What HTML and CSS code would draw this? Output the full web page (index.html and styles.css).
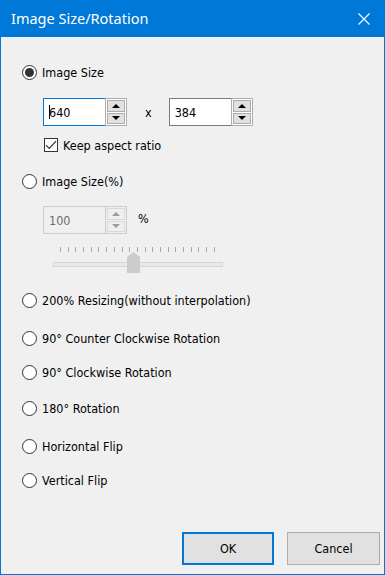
FILE: index.html
```html
<!DOCTYPE html>
<html lang="en">
<head>
  <meta charset="UTF-8">
  <meta name="viewport" content="width=device-width, initial-scale=1.0">
  <title>Image Size/Rotation</title>
  <link rel="stylesheet" href="styles.css">
</head>
<body>
  <div class="window">
    <div class="titlebar">
      <span class="title">Image Size/Rotation</span>
      <svg class="close" width="12" height="12" viewBox="0 0 12 12">
        <path d="M0.5 0.5 L11.5 11.5 M11.5 0.5 L0.5 11.5" stroke="#fff" stroke-width="1.1" fill="none"/>
      </svg>
    </div>

    <div class="content">
      <label class="radio-row row-size"><span class="radio checked"></span>Image Size</label>

      <div class="size-row">
        <div class="spin focused">
          <div class="field"><span class="caret"></span>640</div>
          <div class="arrows">
            <span class="arrow"><span class="tri up"></span></span>
            <span class="arrow"><span class="tri down"></span></span>
          </div>
        </div>
        <span class="times">x</span>
        <div class="spin">
          <div class="field">384</div>
          <div class="arrows">
            <span class="arrow"><span class="tri up"></span></span>
            <span class="arrow"><span class="tri down"></span></span>
          </div>
        </div>
      </div>

      <label class="check-row">
        <span class="checkbox">
          <svg width="12" height="12" viewBox="0 0 12 12"><path d="M1 6.2 L4.3 9.5 L11 2.2" stroke="#333" stroke-width="1.2" fill="none"/></svg>
        </span>Keep aspect ratio
      </label>

      <label class="radio-row row-pct"><span class="radio"></span>Image Size(%)</label>

      <div class="pct-row">
        <div class="spin disabled">
          <div class="field">100</div>
          <div class="arrows">
            <span class="arrow"><span class="tri up"></span></span>
            <span class="arrow"><span class="tri down"></span></span>
          </div>
        </div>
        <span class="percent">%</span>
      </div>

      <div class="slider">
        <div class="ticks">
          <span></span><span></span><span></span><span></span><span></span><span></span><span></span>
          <span></span><span></span><span></span><span></span><span></span><span></span><span></span>
          <span></span><span></span><span></span><span></span><span></span><span></span><span></span>
        </div>
        <div class="track"></div>
        <svg class="thumb" width="13" height="21" viewBox="0 0 13 21"><path d="M0 5 L6.5 0 L13 5 V21 H0 Z" fill="#cccccc"/></svg>
      </div>

      <label class="radio-row row-200"><span class="radio"></span>200% Resizing(without interpolation)</label>
      <label class="radio-row row-ccw"><span class="radio"></span>90&deg;&nbsp;Counter Clockwise Rotation</label>
      <label class="radio-row row-cw"><span class="radio"></span>90&deg;&nbsp;Clockwise Rotation</label>
      <label class="radio-row row-180"><span class="radio"></span>180&deg;&nbsp;Rotation</label>
      <label class="radio-row row-hflip"><span class="radio"></span>Horizontal Flip</label>
      <label class="radio-row row-vflip"><span class="radio"></span>Vertical Flip</label>
    </div>

    <div class="buttons">
      <button class="btn default">OK</button>
      <button class="btn">Cancel</button>
    </div>
  </div>
</body>
</html>
```

FILE: styles.css
```css
html, body {
  margin: 0;
  padding: 0;
}

body {
  width: 385px;
  height: 575px;
  background-color: #f0f0f0;
  font-family: "DejaVu Sans Condensed", "Liberation Sans", sans-serif;
  font-size: 12.5px;
  color: #000;
}

.window {
  box-sizing: border-box;
  width: 385px;
  height: 575px;
  border: 1px solid #0078d7;
  background-color: #f0f0f0;
  display: flex;
  flex-direction: column;
}

.titlebar {
  height: 36px;
  background-color: #0078d7;
  color: white;
  display: flex;
  align-items: center;
  justify-content: space-between;
  padding: 0 14px 0 10px;
  flex-shrink: 0;
}

.title {
  font-family: "Noto Sans", "Open Sans", sans-serif;
  font-size: 14.5px;
  margin-top: -2px;
}

.close {
  margin-top: -1px;
}

.content {
  display: flex;
  flex-direction: column;
  padding-left: 21px;
}

.radio-row {
  display: flex;
  align-items: center;
  height: 20px;
  gap: 5px;
}

.radio {
  box-sizing: border-box;
  width: 15px;
  height: 15px;
  border: 1px solid #333;
  border-radius: 50%;
  background-color: #fff;
  display: flex;
  align-items: center;
  justify-content: center;
  flex-shrink: 0;
}

.radio.checked::after {
  content: "";
  width: 9px;
  height: 9px;
  border-radius: 50%;
  background-color: #333;
}

.row-size { margin-top: 25px; }
.row-pct { margin-top: 16px; }
.row-200 { margin-top: 17px; }
.row-ccw { margin-top: 18px; }
.row-cw { margin-top: 14px; }
.row-180 { margin-top: 16px; }
.row-hflip { margin-top: 18px; }
.row-vflip { margin-top: 14px; }

/* spin boxes */
.size-row, .pct-row {
  display: flex;
  align-items: center;
  padding-left: 21px;
  height: 28px;
}

.size-row { margin-top: 16px; }
.pct-row { margin-top: 15px; }

.spin {
  display: flex;
  height: 28px;
  width: 84px;
}

.field {
  box-sizing: border-box;
  width: 62px;
  height: 28px;
  border: 1px solid #7a7a7a;
  border-right: none;
  background-color: #fff;
  padding-left: 5px;
  display: flex;
  align-items: center;
}

.spin.focused .field {
  border-color: #0078d7;
}

.caret {
  width: 1px;
  height: 14px;
  background-color: #000;
  margin-right: -1px;
}

.arrows {
  box-sizing: border-box;
  width: 22px;
  height: 28px;
  border: 1px solid #adadad;
  background-color: #fff;
  padding: 1px;
  display: flex;
  flex-direction: column;
  gap: 1px;
}

.arrow {
  box-sizing: border-box;
  flex: 1;
  border: 1px solid #adadad;
  background-color: #e1e1e1;
  display: flex;
  align-items: center;
  justify-content: center;
}

.tri {
  width: 0;
  height: 0;
  border-left: 4px solid transparent;
  border-right: 4px solid transparent;
}

.tri.up { border-bottom: 4px solid #000; }
.tri.down { border-top: 4px solid #000; }

.spin.disabled .field {
  border-color: #cccccc;
  background-color: #f0f0f0;
  color: #6d6d6d;
}

.spin.disabled .arrows {
  border-color: #cccccc;
  background-color: #f0f0f0;
}

.spin.disabled .arrow {
  border-color: #d9d9d9;
  background-color: #f0f0f0;
}

.spin.disabled .tri.up { border-bottom-color: #9a9a9a; }
.spin.disabled .tri.down { border-top-color: #9a9a9a; }

.times {
  margin: 0 17px 0 18px;
}

.percent {
  margin-left: 11px;
  margin-top: -4px;
}

/* checkbox */
.check-row {
  display: flex;
  align-items: center;
  height: 20px;
  margin-top: 9px;
  padding-left: 22px;
  gap: 5px;
}

.checkbox {
  box-sizing: border-box;
  width: 14px;
  height: 14px;
  border: 1px solid #333;
  background-color: #fff;
  display: flex;
  align-items: center;
  justify-content: center;
}

/* slider */
.slider {
  position: relative;
  margin-top: 13px;
  margin-left: 31px;
  width: 170px;
  height: 26px;
}

.ticks {
  display: flex;
  justify-content: space-between;
  width: 155px;
  margin-left: 7px;
  height: 5px;
}

.ticks span {
  width: 1px;
  height: 5px;
  background-color: #a8a8a8;
}

.track {
  box-sizing: border-box;
  margin-top: 10px;
  height: 5px;
  width: 170px;
  border: 1px solid #d6d6d6;
  background-color: #e7eaea;
}

.thumb {
  position: absolute;
  left: 74px;
  top: 5px;
}

/* buttons */
.buttons {
  margin-top: auto;
  display: flex;
  justify-content: flex-end;
  gap: 13px;
  padding: 0 4px 9px 0;
}

.btn {
  box-sizing: border-box;
  width: 93px;
  height: 33px;
  background-color: #e1e1e1;
  border: 1px solid #adadad;
  font-family: "DejaVu Sans Condensed", "Liberation Sans", sans-serif;
  font-size: 12.5px;
  color: #000;
  padding: 0;
}

.btn.default {
  border: 2px solid #0078d7;
  width: 92px;
}
```
